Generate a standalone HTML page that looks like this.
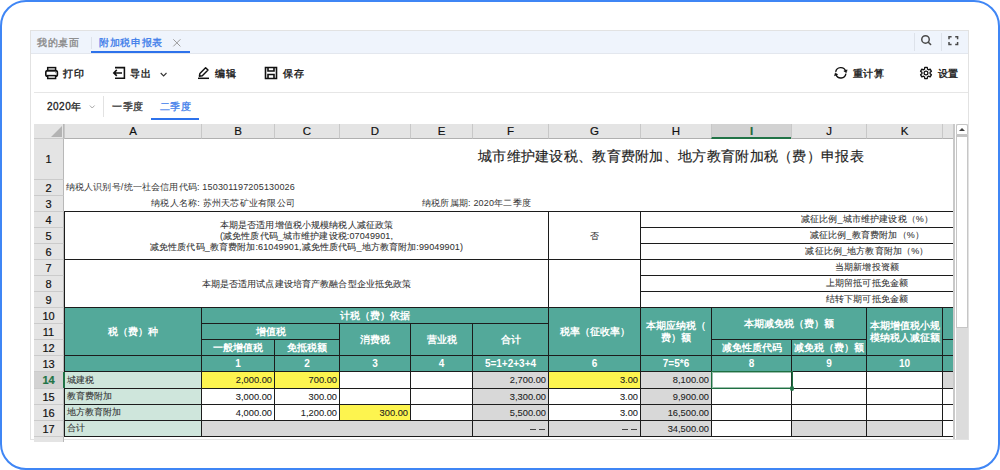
<!DOCTYPE html>
<html><head><meta charset="utf-8">
<style>
*{box-sizing:border-box;margin:0;padding:0}
html,body{width:1000px;height:470px;overflow:hidden;background:#fff;font-family:"Liberation Sans",sans-serif;color:#222}
.ls{letter-spacing:0.15px}
#frame{position:absolute;left:0;top:0;width:1000px;height:470px;border:2px solid #3f86f5;border-radius:26px}
#win{position:absolute;left:30px;top:30px;width:939px;height:410px;border:1px solid #e2e2e2;background:#fff}
.abs{position:absolute}
#tabbar{position:absolute;left:31px;top:31px;width:937px;height:23px;background:#eff4fc;border-bottom:1px solid #e3e7ee}
.tab{position:absolute;top:36px;font-size:10px;line-height:14px;white-space:nowrap;letter-spacing:0.7px;-webkit-text-stroke:0.3px currentColor}
.vsep{position:absolute;width:1px;background:#dde2ea}
.tb{position:absolute;top:66px;font-size:10px;line-height:14px;color:#1f1f1f;white-space:nowrap;font-weight:normal;letter-spacing:0.8px;-webkit-text-stroke:0.4px currentColor}
.c{position:absolute;overflow:hidden;white-space:nowrap}
.c span{position:absolute}
.h{color:#fff;font-weight:bold;font-size:10px;line-height:12px;display:flex;align-items:center;justify-content:center;text-align:center}
.h span{position:static}
.dl{font-size:9px;color:#333;-webkit-text-stroke:0.08px currentColor;display:flex;align-items:center;padding-left:2px}
.dl span,.dr span,.ctr span,.rtx span{position:static}
.dr{font-size:9.3px;color:#222;-webkit-text-stroke:0.08px currentColor;display:flex;align-items:center;justify-content:flex-end;padding-right:2px}
.ctr{font-size:9px;line-height:11px;color:#333;-webkit-text-stroke:0.08px currentColor;display:flex;align-items:center;justify-content:center;text-align:center;letter-spacing:0.12px;padding-top:2px}
.rtt{position:absolute;left:791px;width:152px;font-size:9px;color:#333;-webkit-text-stroke:0.08px currentColor;display:flex;align-items:center;justify-content:center;white-space:nowrap;letter-spacing:0.15px}
.ch{position:absolute;top:124px;height:15px;background:#e4e4e4;border-left:1px solid #c8c8c8;border-bottom:1px solid #b0b0b0;font-size:11.5px;line-height:14px;text-align:center;color:#111;-webkit-text-stroke:0.2px currentColor}
.ch.sel{background:#d2d2d2;color:#1d6b3a;border-bottom:2px solid #217346;font-weight:bold}
.dd{display:inline-block;width:6.5px;height:1px;background:#444;margin-left:2.5px;vertical-align:middle}.dd+.dd{margin-right:1px}
.rh{position:absolute;left:34px;width:30px;background:#e4e4e4;border-top:1px solid #cbcbcb;border-right:1px solid #b8b8b8;font-size:11px;-webkit-text-stroke:0.2px currentColor;display:flex;align-items:center;justify-content:center;color:#111}
.yq{font-weight:normal;font-size:10px;letter-spacing:0.5px;-webkit-text-stroke:0.3px currentColor}
.rh.sel{background:#d2d2d2;color:#217346;font-weight:bold}
</style></head><body>
<div id="frame"></div>
<div id="win"></div>
<div id="tabbar"></div>
<div class="tab" style="left:37px;color:#888">我的桌面</div>
<div class="vsep" style="left:91px;top:37px;height:12px"></div>
<div class="tab" style="left:99px;color:#3b7bea">附加税申报表</div>
<svg class="abs" style="left:172px;top:38px" width="10" height="10" viewBox="0 0 10 10"><path d="M1.3 1.3L8.4 8.4M8.4 1.3L1.3 8.4" stroke="#9a9a9a" stroke-width="1"/></svg>
<div class="abs" style="left:91px;top:51px;width:99px;height:2px;background:#2d72eb"></div>
<div class="vsep" style="left:914px;top:33px;height:18px"></div>
<div class="vsep" style="left:941px;top:33px;height:18px"></div>
<svg class="abs" style="left:919px;top:33px" width="14" height="14" viewBox="0 0 14 14"><circle cx="6.5" cy="6.4" r="3.75" fill="none" stroke="#4a4a4a" stroke-width="1.5"/><path d="M9.3 9.2 L11.6 11.5" stroke="#4a4a4a" stroke-width="1.6" stroke-linecap="round"/></svg>
<svg class="abs" style="left:947px;top:35px" width="12" height="11" viewBox="0 0 12 11"><path d="M2 4.2V1.8H4.6 M8.2 1.8H10.6V4.2 M10.6 7.0V9.4H8.2 M4.6 9.4H2V7.0" fill="none" stroke="#4a4a4a" stroke-width="1.5"/></svg>

<!-- toolbar -->
<svg class="abs" style="left:44px;top:66px" width="15" height="14" viewBox="0 0 15 14"><rect x="3.7" y="1.6" width="7.9" height="3" fill="none" stroke="#111" stroke-width="1.5"/><rect x="1.8" y="4.6" width="11.6" height="5.6" rx="1.8" fill="none" stroke="#111" stroke-width="1.6"/><rect x="3.7" y="9.6" width="7.9" height="2.9" fill="#fff" stroke="#111" stroke-width="1.5"/><circle cx="11.4" cy="6.8" r="0.45" fill="#111"/></svg>
<div class="tb" style="left:63px;top:67px">打印</div>
<svg class="abs" style="left:112px;top:66px" width="15" height="14" viewBox="0 0 15 14"><path d="M3 1.6H12.4V12.3H3 M10 6.9H1.8 M4.8 3.9L1.8 6.9L4.8 9.9" fill="none" stroke="#111" stroke-width="1.55"/></svg>
<div class="tb" style="left:130px;top:67px">导出</div>
<svg class="abs" style="left:160px;top:71.5px" width="8" height="6" viewBox="0 0 8 6"><path d="M0.7 1L3.6 3.9L6.5 1" fill="none" stroke="#333" stroke-width="1.1"/></svg>
<svg class="abs" style="left:197px;top:66px" width="13" height="14" viewBox="0 0 13 14"><path d="M2.4 10.2L2.9 7.4L8.6 1.7L11 4.1L5.3 9.8Z" fill="none" stroke="#111" stroke-width="1.45" stroke-linejoin="round"/><path d="M1 12.3H12" stroke="#111" stroke-width="1.5"/></svg>
<div class="tb" style="left:215px;top:67px">编辑</div>
<svg class="abs" style="left:264px;top:66px" width="14" height="14" viewBox="0 0 14 14"><path d="M1.5 1.5H12.5V12.5H1.5Z M4 1.5V5H10V1.5 M4 12.5V8.5H10V12.5" fill="none" stroke="#111" stroke-width="1.6"/></svg>
<div class="tb" style="left:283px;top:67px">保存</div>
<svg class="abs" style="left:832px;top:64px" width="16" height="16" viewBox="832 64 16 16"><path d="M835.68 71.90 A5.2 5.2 0 0 1 845.69 71.02 M845.92 73.70 A5.2 5.2 0 0 1 835.91 74.58" fill="none" stroke="#111" stroke-width="1.35"/><path d="M846.31 72.71 L847.18 69.84 L843.80 71.07Z M835.29 72.89 L834.42 75.76 L837.81 74.53Z" fill="#111" stroke="#111" stroke-width="0.5" stroke-linejoin="round"/></svg>
<div class="tb" style="left:852.5px;top:67px">重计算</div>
<svg class="abs" style="left:918.7px;top:65.8px" width="14" height="14" viewBox="0 0 14 14"><path d="M4.95 3.45 L5.53 3.17 L5.72 1.45 L8.28 1.45 L8.47 3.17 L9.05 3.45 L9.58 3.81 L11.17 3.11 L12.45 5.33 L11.05 6.36 L11.10 7.00 L11.05 7.64 L12.45 8.67 L11.17 10.89 L9.58 10.19 L9.05 10.55 L8.47 10.83 L8.28 12.55 L5.72 12.55 L5.53 10.83 L4.95 10.55 L4.42 10.19 L2.83 10.89 L1.55 8.67 L2.95 7.64 L2.90 7.00 L2.95 6.36 L1.55 5.33 L2.83 3.11 L4.42 3.81Z" fill="none" stroke="#111" stroke-width="1.3" stroke-linejoin="round"/><circle cx="7" cy="7" r="1.9" fill="none" stroke="#111" stroke-width="1.25"/></svg>
<div class="tb" style="left:937.5px;top:67px">设置</div>
<div class="abs" style="left:34px;top:92px;width:934px;height:1px;background:#e6e6e6"></div>

<!-- year / quarter -->
<div class="tb yq" style="left:47px;top:99.5px;color:#222">2020年</div>
<svg class="abs" style="left:89px;top:104px" width="7" height="6" viewBox="0 0 7 6"><path d="M0.8 1.5L3.2 4L5.6 1.5" fill="none" stroke="#aaa" stroke-width="1"/></svg>
<div class="vsep" style="left:103px;top:96px;height:21px;background:#e2e2e2"></div>
<div class="tb yq" style="left:112px;top:99.5px;color:#333">一季度</div>
<div class="tb yq" style="left:159.5px;top:99.5px;color:#3b7bea">二季度</div>
<div class="abs" style="left:151px;top:118px;width:48px;height:2px;background:#2d72eb"></div>

<!-- spreadsheet -->
<div class="abs" style="left:34px;top:124px;width:920px;height:315px;background:#fff;overflow:hidden" id="sheet"></div>
<div class="abs" style="left:34px;top:124px;width:30px;height:15px;background:#e4e4e4;border-right:1px solid #b8b8b8;border-bottom:1px solid #b0b0b0"></div>
<svg class="abs" style="left:50px;top:126px" width="13" height="11"><path d="M12 0V11H1Z" fill="#b3b3b3"/></svg>
<div class="ch" style="left:64px;width:137px">A</div><div class="ch" style="left:201px;width:73px">B</div><div class="ch" style="left:274px;width:65px">C</div><div class="ch" style="left:339px;width:71px">D</div><div class="ch" style="left:410px;width:62px">E</div><div class="ch" style="left:472px;width:76px">F</div><div class="ch" style="left:548px;width:92px">G</div><div class="ch" style="left:640px;width:71px">H</div><div class="ch sel" style="left:711px;width:80px">I</div><div class="ch" style="left:791px;width:75px">J</div><div class="ch" style="left:866px;width:76px">K</div><div class="ch" style="left:942px;width:12px"></div>
<div class="rh" style="top:138px;height:41px">1</div><div class="rh" style="top:179px;height:16px">2</div><div class="rh" style="top:195px;height:16px">3</div><div class="rh" style="top:211px;height:16px">4</div><div class="rh" style="top:227px;height:16px">5</div><div class="rh" style="top:243px;height:16px">6</div><div class="rh" style="top:259px;height:16px">7</div><div class="rh" style="top:275px;height:16px">8</div><div class="rh" style="top:291px;height:16px">9</div><div class="rh" style="top:307px;height:16px">10</div><div class="rh" style="top:323px;height:16px">11</div><div class="rh" style="top:339px;height:16px">12</div><div class="rh" style="top:355px;height:16px">13</div><div class="rh sel" style="top:371px;height:17px">14</div><div class="rh" style="top:388px;height:16px">15</div><div class="rh" style="top:404px;height:16px">16</div><div class="rh" style="top:420px;height:16px">17</div><div class="rh" style="top:436px;height:6px"></div>
<div class="abs" style="left:64px;top:151px;width:0;height:0"></div>
<div class="abs" style="left:478px;top:147px;font-size:14px;line-height:18px;color:#222;white-space:nowrap;letter-spacing:0.29px;-webkit-text-stroke:0.15px currentColor">城市维护建设税、教育费附加、地方教育附加税（费）申报表</div>
<div class="abs" style="left:0px;width:295px;text-align:right;top:181px;font-size:9px;line-height:12px;color:#333;white-space:nowrap;letter-spacing:0.18px">纳税人识别号/统一社会信用代码: 150301197205130026</div>
<div class="abs" style="left:0px;width:295px;text-align:right;top:197px;font-size:9px;line-height:12px;color:#333;white-space:nowrap;letter-spacing:0.22px">纳税人名称: 苏州天芯矿业有限公司</div>
<div class="abs" style="left:422px;top:197px;font-size:9px;line-height:12px;color:#333;white-space:nowrap;letter-spacing:0.2px">纳税所属期: 2020年二季度</div>
<div class="c h" style="left:64px;top:307px;width:138px;height:49px;background:#53a99a;border:1px solid #1c1c1c;"><span>税（费）种</span></div>
<div class="c h" style="left:64px;top:355px;width:138px;height:17px;background:#53a99a;border:1px solid #1c1c1c;"></div>
<div class="c h" style="left:201px;top:307px;width:348px;height:17px;background:#53a99a;border:1px solid #1c1c1c;"><span>计税（费）依据</span></div>
<div class="c h" style="left:201px;top:323px;width:139px;height:17px;background:#53a99a;border:1px solid #1c1c1c;"><span>增值税</span></div>
<div class="c h" style="left:201px;top:339px;width:74px;height:17px;background:#53a99a;border:1px solid #1c1c1c;"><span>一般增值税</span></div>
<div class="c h" style="left:274px;top:339px;width:66px;height:17px;background:#53a99a;border:1px solid #1c1c1c;"><span>免抵税额</span></div>
<div class="c h" style="left:339px;top:323px;width:72px;height:33px;background:#53a99a;border:1px solid #1c1c1c;"><span>消费税</span></div>
<div class="c h" style="left:410px;top:323px;width:63px;height:33px;background:#53a99a;border:1px solid #1c1c1c;"><span>营业税</span></div>
<div class="c h" style="left:472px;top:323px;width:77px;height:33px;background:#53a99a;border:1px solid #1c1c1c;"><span>合计</span></div>
<div class="c h" style="left:548px;top:307px;width:93px;height:49px;background:#53a99a;border:1px solid #1c1c1c;"><span>税率（征收率）</span></div>
<div class="c h" style="left:640px;top:307px;width:72px;height:49px;background:#53a99a;border:1px solid #1c1c1c;"><span>本期应纳税（<br>费）额</span></div>
<div class="c h" style="left:711px;top:307px;width:156px;height:33px;background:#53a99a;border:1px solid #1c1c1c;"><span>本期减免税（费）额</span></div>
<div class="c h" style="left:711px;top:339px;width:81px;height:17px;background:#53a99a;border:1px solid #1c1c1c;"><span>减免性质代码</span></div>
<div class="c h" style="left:791px;top:339px;width:76px;height:17px;background:#53a99a;border:1px solid #1c1c1c;"><span>减免税（费）额</span></div>
<div class="c h" style="left:866px;top:307px;width:77px;height:49px;background:#53a99a;border:1px solid #1c1c1c;"><span>本期增值税小规<br>模纳税人减征额</span></div>
<div class="c h" style="left:942px;top:307px;width:13px;height:33px;background:#53a99a;border:1px solid #1c1c1c;"></div>
<div class="c h" style="left:942px;top:339px;width:13px;height:17px;background:#53a99a;border:1px solid #1c1c1c;"></div>
<div class="c h" style="left:201px;top:355px;width:74px;height:17px;background:#53a99a;border:1px solid #1c1c1c;"><span>1</span></div>
<div class="c h" style="left:274px;top:355px;width:66px;height:17px;background:#53a99a;border:1px solid #1c1c1c;"><span>2</span></div>
<div class="c h" style="left:339px;top:355px;width:72px;height:17px;background:#53a99a;border:1px solid #1c1c1c;"><span>3</span></div>
<div class="c h" style="left:410px;top:355px;width:63px;height:17px;background:#53a99a;border:1px solid #1c1c1c;"><span>4</span></div>
<div class="c h" style="left:472px;top:355px;width:77px;height:17px;background:#53a99a;border:1px solid #1c1c1c;"><span>5=1+2+3+4</span></div>
<div class="c h" style="left:548px;top:355px;width:93px;height:17px;background:#53a99a;border:1px solid #1c1c1c;"><span>6</span></div>
<div class="c h" style="left:640px;top:355px;width:72px;height:17px;background:#53a99a;border:1px solid #1c1c1c;"><span>7=5*6</span></div>
<div class="c h" style="left:711px;top:355px;width:81px;height:17px;background:#53a99a;border:1px solid #1c1c1c;"><span>8</span></div>
<div class="c h" style="left:791px;top:355px;width:76px;height:17px;background:#53a99a;border:1px solid #1c1c1c;"><span>9</span></div>
<div class="c h" style="left:866px;top:355px;width:77px;height:17px;background:#53a99a;border:1px solid #1c1c1c;"><span>10</span></div>
<div class="c h" style="left:942px;top:355px;width:13px;height:17px;background:#53a99a;border:1px solid #1c1c1c;"><span></span></div>
<div class="c dl" style="left:64px;top:371px;width:138px;height:18px;background:#cfe6dc;border:1px solid #1c1c1c;"><span>城建税</span></div>
<div class="c dr" style="left:201px;top:371px;width:74px;height:18px;background:#fdf44f;border:1px solid #1c1c1c;"><span>2,000.00</span></div>
<div class="c dr" style="left:274px;top:371px;width:66px;height:18px;background:#fdf44f;border:1px solid #1c1c1c;"><span>700.00</span></div>
<div class="c dr" style="left:339px;top:371px;width:72px;height:18px;background:#fff;border:1px solid #1c1c1c;"><span></span></div>
<div class="c dr" style="left:410px;top:371px;width:63px;height:18px;background:#fff;border:1px solid #1c1c1c;"><span></span></div>
<div class="c dr" style="left:472px;top:371px;width:77px;height:18px;background:#d8d8d8;border:1px solid #1c1c1c;"><span>2,700.00</span></div>
<div class="c dr" style="left:548px;top:371px;width:93px;height:18px;background:#fdf44f;border:1px solid #1c1c1c;"><span>3.00</span></div>
<div class="c dr" style="left:640px;top:371px;width:72px;height:18px;background:#d8d8d8;border:1px solid #1c1c1c;"><span>8,100.00</span></div>
<div class="c dr" style="left:711px;top:371px;width:81px;height:18px;background:#fff;border:1px solid #1c1c1c;"><span></span></div>
<div class="c dr" style="left:791px;top:371px;width:76px;height:18px;background:#fff;border:1px solid #1c1c1c;"><span></span></div>
<div class="c dr" style="left:866px;top:371px;width:77px;height:18px;background:#fff;border:1px solid #1c1c1c;"><span></span></div>
<div class="c dr" style="left:942px;top:371px;width:13px;height:18px;background:#d8d8d8;border:1px solid #1c1c1c;"><span></span></div>
<div class="c dl" style="left:64px;top:388px;width:138px;height:17px;background:#cfe6dc;border:1px solid #1c1c1c;"><span>教育费附加</span></div>
<div class="c dr" style="left:201px;top:388px;width:74px;height:17px;background:#fff;border:1px solid #1c1c1c;"><span>3,000.00</span></div>
<div class="c dr" style="left:274px;top:388px;width:66px;height:17px;background:#fff;border:1px solid #1c1c1c;"><span>300.00</span></div>
<div class="c dr" style="left:339px;top:388px;width:72px;height:17px;background:#fff;border:1px solid #1c1c1c;"><span></span></div>
<div class="c dr" style="left:410px;top:388px;width:63px;height:17px;background:#fff;border:1px solid #1c1c1c;"><span></span></div>
<div class="c dr" style="left:472px;top:388px;width:77px;height:17px;background:#d8d8d8;border:1px solid #1c1c1c;"><span>3,300.00</span></div>
<div class="c dr" style="left:548px;top:388px;width:93px;height:17px;background:#fff;border:1px solid #1c1c1c;"><span>3.00</span></div>
<div class="c dr" style="left:640px;top:388px;width:72px;height:17px;background:#d8d8d8;border:1px solid #1c1c1c;"><span>9,900.00</span></div>
<div class="c dr" style="left:711px;top:388px;width:81px;height:17px;background:#fff;border:1px solid #1c1c1c;"><span></span></div>
<div class="c dr" style="left:791px;top:388px;width:76px;height:17px;background:#fff;border:1px solid #1c1c1c;"><span></span></div>
<div class="c dr" style="left:866px;top:388px;width:77px;height:17px;background:#fff;border:1px solid #1c1c1c;"><span></span></div>
<div class="c dr" style="left:942px;top:388px;width:13px;height:17px;background:#fff;border:1px solid #1c1c1c;"><span></span></div>
<div class="c dl" style="left:64px;top:404px;width:138px;height:17px;background:#cfe6dc;border:1px solid #1c1c1c;"><span>地方教育附加</span></div>
<div class="c dr" style="left:201px;top:404px;width:74px;height:17px;background:#fff;border:1px solid #1c1c1c;"><span>4,000.00</span></div>
<div class="c dr" style="left:274px;top:404px;width:66px;height:17px;background:#fff;border:1px solid #1c1c1c;"><span>1,200.00</span></div>
<div class="c dr" style="left:339px;top:404px;width:72px;height:17px;background:#fdf44f;border:1px solid #1c1c1c;"><span>300.00</span></div>
<div class="c dr" style="left:410px;top:404px;width:63px;height:17px;background:#fff;border:1px solid #1c1c1c;"><span></span></div>
<div class="c dr" style="left:472px;top:404px;width:77px;height:17px;background:#d8d8d8;border:1px solid #1c1c1c;"><span>5,500.00</span></div>
<div class="c dr" style="left:548px;top:404px;width:93px;height:17px;background:#fff;border:1px solid #1c1c1c;"><span>3.00</span></div>
<div class="c dr" style="left:640px;top:404px;width:72px;height:17px;background:#d8d8d8;border:1px solid #1c1c1c;"><span>16,500.00</span></div>
<div class="c dr" style="left:711px;top:404px;width:81px;height:17px;background:#fff;border:1px solid #1c1c1c;"><span></span></div>
<div class="c dr" style="left:791px;top:404px;width:76px;height:17px;background:#fff;border:1px solid #1c1c1c;"><span></span></div>
<div class="c dr" style="left:866px;top:404px;width:77px;height:17px;background:#fff;border:1px solid #1c1c1c;"><span></span></div>
<div class="c dr" style="left:942px;top:404px;width:13px;height:17px;background:#fff;border:1px solid #1c1c1c;"><span></span></div>
<div class="c dl" style="left:64px;top:420px;width:138px;height:17px;background:#cfe6dc;border:1px solid #1c1c1c;"><span>合计</span></div>
<div class="c dr" style="left:201px;top:420px;width:272px;height:17px;background:#d8d8d8;border:1px solid #1c1c1c;"></div>
<div class="c dr" style="left:472px;top:420px;width:77px;height:17px;background:#d8d8d8;border:1px solid #1c1c1c;"><span><i class="dd"></i><i class="dd"></i></span></div>
<div class="c dr" style="left:548px;top:420px;width:93px;height:17px;background:#d8d8d8;border:1px solid #1c1c1c;"><span><i class="dd"></i><i class="dd"></i></span></div>
<div class="c dr" style="left:640px;top:420px;width:72px;height:17px;background:#d8d8d8;border:1px solid #1c1c1c;"><span>34,500.00</span></div>
<div class="c dr" style="left:711px;top:420px;width:81px;height:17px;background:#fff;border:1px solid #1c1c1c;"><span></span></div>
<div class="c dr" style="left:791px;top:420px;width:76px;height:17px;background:#d8d8d8;border:1px solid #1c1c1c;"><span></span></div>
<div class="c dr" style="left:866px;top:420px;width:77px;height:17px;background:#d8d8d8;border:1px solid #1c1c1c;"><span></span></div>
<div class="c dr" style="left:942px;top:420px;width:13px;height:17px;background:#fff;border:1px solid #1c1c1c;"><span></span></div>
<div class="c ctr" style="left:64px;top:211px;width:485px;height:49px;background:#fff;border:1px solid #1c1c1c;"><span>本期是否适用增值税小规模纳税人减征政策<br>(减免性质代码_城市维护建设税:07049901,<br>减免性质代码_教育费附加:61049901,减免性质代码_地方教育附加:99049901)</span></div>
<div class="c ctr" style="left:548px;top:211px;width:93px;height:49px;background:#fff;border:1px solid #1c1c1c;"><span>否</span></div>
<div class="c ctr" style="left:64px;top:259px;width:485px;height:49px;background:#fff;border:1px solid #1c1c1c;"><span>本期是否适用试点建设培育产教融合型企业抵免政策</span></div>
<div class="c ctr" style="left:548px;top:259px;width:93px;height:49px;background:#fff;border:1px solid #1c1c1c;"></div>
<div class="c rtx" style="left:640px;top:211px;width:315px;height:17px;background:#fff;border:1px solid #1c1c1c;"></div>
<div class="rtt" style="top:212px;height:15px">减征比例_城市维护建设税（%）</div>
<div class="c rtx" style="left:640px;top:227px;width:315px;height:17px;background:#fff;border:1px solid #1c1c1c;"></div>
<div class="rtt" style="top:228px;height:15px">减征比例_教育费附加（%）</div>
<div class="c rtx" style="left:640px;top:243px;width:315px;height:17px;background:#fff;border:1px solid #1c1c1c;"></div>
<div class="rtt" style="top:244px;height:15px">减征比例_地方教育附加（%）</div>
<div class="c rtx" style="left:640px;top:259px;width:315px;height:17px;background:#fff;border:1px solid #1c1c1c;"></div>
<div class="rtt" style="top:260px;height:15px">当期新增投资额</div>
<div class="c rtx" style="left:640px;top:275px;width:315px;height:17px;background:#fff;border:1px solid #1c1c1c;"></div>
<div class="rtt" style="top:276px;height:15px">上期留抵可抵免金额</div>
<div class="c rtx" style="left:640px;top:291px;width:315px;height:17px;background:#fff;border:1px solid #1c1c1c;"></div>
<div class="rtt" style="top:292px;height:15px">结转下期可抵免金额</div>
<div class="abs" style="left:711px;top:371px;width:82px;height:18px;border:1px solid #1f6f42"></div>
<div class="abs" style="left:712px;top:372px;width:80px;height:16px;border:1px solid rgba(33,115,70,0.45)"></div>
<div class="abs" style="left:789.5px;top:386px;width:4.5px;height:4.5px;background:#217346;border-radius:50%"></div>
<div class="abs" style="left:63px;top:372px;width:2px;height:16px;background:#217346"></div>
<div class="abs" style="left:953px;top:124px;width:2px;height:315px;background:#c9c9c9"></div>
<!-- scrollbar -->
<div class="abs" style="left:956px;top:124px;width:12px;height:315px;background:#dcdcdc"></div>
<div class="abs" style="left:956px;top:124px;width:12px;height:11px;background:#fff;border:1px solid #c6c6c6;border-radius:2px 2px 0 0"></div>
<svg class="abs" style="left:958px;top:126px" width="8" height="6"><path d="M1 5L4 2L7 5Z" fill="#444"/></svg>
<div class="abs" style="left:956px;top:135px;width:12px;height:193px;background:#fff;border:1px solid #c6c6c6;border-top:2px solid #c6c6c6"></div>
</body></html>
